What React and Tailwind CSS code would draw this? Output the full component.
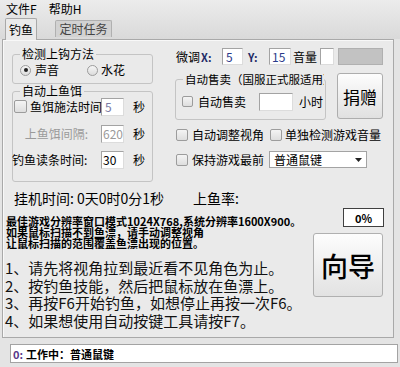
import React from "react";

const Box = ({ w, h, children, className = "" }) => (
  <div
    className={`bg-white border border-[#a3a3a3] border-b-[#dcdcdc] border-r-[#dcdcdc] flex items-center px-[3px] text-[12px] ${className}`}
    style={{ width: w, height: h }}
  >
    {children}
  </div>
);

const Check = ({ size = 12 }) => (
  <span
    className="inline-block shrink-0 border border-[#9c9c9c] rounded-[2px] bg-gradient-to-b from-[#f4f4f4] to-[#dedede]"
    style={{ width: size, height: size }}
  />
);

const Radio = ({ on }) => (
  <span className="w-[11px] h-[11px] shrink-0 rounded-full border border-[#9c9c9c] bg-gradient-to-b from-[#f6f6f6] to-[#dcdcdc] flex items-center justify-center">
    {on && <span className="w-[4px] h-[4px] rounded-full bg-[#222]" />}
  </span>
);

const Group = ({ title, className = "", legendClass = "", children }) => (
  <fieldset className={`border border-[#c4c4c4] rounded-[3px] ${className}`}>
    <legend className={`ml-[7px] px-[2px] leading-[14px] ${legendClass}`}>{title}</legend>
    {children}
  </fieldset>
);

export default function App() {
  return (
    <div className="w-[400px] h-[367px] bg-[#e4e4e4] text-[12px] leading-[14px] text-black font-['Noto_Sans_CJK_SC',sans-serif] flex flex-col overflow-hidden">
      <div className="bg-gradient-to-b from-[#ececec] to-[#d9d9d9]">
        <div className="h-[17px] flex items-center gap-[12px] pl-[6px]">
          <span>文件F</span>
          <span>帮助H</span>
        </div>
        <div className="h-[22px] flex items-end pl-[5px] gap-[18px]">
          <div className="relative z-10 -mb-px h-[22px] w-[32px] bg-[#eaeaea] border border-b-0 border-[#a9a9a9] rounded-t-[2px] flex items-center justify-center">
            钓鱼
          </div>
          <div className="mb-[2px] h-[17px] w-[57px] bg-[#d2d2d2] border border-b-0 border-[#b0b0b0] rounded-t-[2px] flex items-center justify-center text-[#444]">
            定时任务
          </div>
        </div>
      </div>

      <div className="ml-[2px] w-[392px] h-[299px] bg-[#eaeaea] border border-[#a9a9a9] shadow-[inset_1px_1px_0_#f8f8f8]">
        <div className="flex">
          {/* left column */}
          <div className="ml-[9px] mt-[7px] w-[141px]">
            <Group title="检测上钩方法" className="h-[37px]">
              <div className="mt-[2px] h-[14px] pl-[7px] flex items-center">
                <Radio on />
                <span className="ml-[4px]">声音</span>
                <span className="ml-[28px]">
                  <Radio />
                </span>
                <span className="ml-[3px]">水花</span>
              </div>
            </Group>
            <Group title="自动上鱼饵" className="h-[98px]">
              <div className="h-[18px] flex items-center">
                <div className="w-[88px] flex items-center">
                  <span className="ml-[1px]">
                    <Check size={13} />
                  </span>
                  <span className="ml-[3px] whitespace-nowrap">鱼饵施法时间</span>
                </div>
                <Box w={23} h={18} className="text-[#7b7ba3]">5</Box>
                <span className="ml-[9px]">秒</span>
              </div>
              <div className="mt-[9px] h-[18px] flex items-center">
                <span className="w-[75px] text-right text-[#9a9a9a] whitespace-nowrap">上鱼饵间隔:</span>
                <span className="ml-[13px]">
                  <Box w={23} h={18} className="text-[#9a9a9a] !px-[1px]">620</Box>
                </span>
                <span className="ml-[9px]">秒</span>
              </div>
              <div className="mt-[8px] h-[18px] flex items-center">
                <span className="w-[75px] text-right whitespace-nowrap -ml-[1px]">钓鱼读条时间:</span>
                <span className="ml-[14px]">
                  <Box w={23} h={18} className="!px-[1px]">30</Box>
                </span>
                <span className="ml-[9px]">秒</span>
              </div>
            </Group>
          </div>

          {/* right column */}
          <div className="ml-[22px] mt-[8px] w-[210px]">
            <div className="h-[17px] flex items-center pl-[1px]">
              <span className="w-[25px]">微调</span>
              <span className="w-[21px] font-bold text-[#1f2a66] text-[11px]">X:</span>
              <Box w={21} h={17} className="text-[#2a3a8a]">5</Box>
              <span className="ml-[5px] w-[21px] font-bold text-[#1f2a66] text-[11px]">Y:</span>
              <Box w={22} h={17} className="text-[#2a3a8a] !px-[2px]">15</Box>
              <span className="ml-[2px] w-[27px]">音量</span>
              <Box w={14} h={17} />
              <div className="ml-[4px] w-[45px] h-[17px] bg-[#c2c2c2] border border-[#b0b0b0]" />
            </div>
            <div className="mt-[7px] flex items-start">
              <Group
                title="自动售卖（国服正式服适用）"
                className="w-[151px] h-[48px] min-w-0"
                legendClass="max-w-[141px] overflow-hidden whitespace-nowrap text-[11.5px]"
              >
                <div className="mt-[7px] h-[18px] flex items-center">
                  <span className="ml-[6px]">
                    <Check size={11} />
                  </span>
                  <span className="ml-[5px] w-[61px]">自动售卖</span>
                  <Box w={34} h={18} />
                  <span className="ml-[6px]">小时</span>
                </div>
              </Group>
              <button className="ml-[11px] mt-[1px] w-[46px] h-[46px] rounded-[3px] border border-[#adadad] bg-gradient-to-b from-[#fdfdfd] to-[#e0e0e0] text-[17px] leading-none">
                捐赠
              </button>
            </div>
            <div className="mt-[8px] h-[14px] flex items-center pl-[1px]">
              <Check />
              <span className="ml-[4px] w-[78px] whitespace-nowrap">自动调整视角</span>
              <Check />
              <span className="ml-[3px] whitespace-nowrap">单独检测游戏音量</span>
            </div>
            <div className="mt-[9px] h-[17px] flex items-center pl-[1px]">
              <Check />
              <span className="ml-[4px] w-[77px] whitespace-nowrap">保持游戏最前</span>
              <div className="w-[98px] h-[17px] bg-white border border-[#a3a3a3] flex items-center">
                <span className="flex-1 pl-[4px]">普通鼠键</span>
                <span className="w-[15px] h-full flex items-center justify-center">
                  <svg width="7" height="4" viewBox="0 0 7 4">
                    <path d="M0 0h7L3.5 4z" fill="#222" />
                  </svg>
                </span>
              </div>
            </div>
          </div>
        </div>

        {/* bottom */}
        <div className="mt-[8px] pl-[11px] h-[16px] flex items-center text-[14px] leading-[16px]">
          <span className="w-[179px] whitespace-nowrap">挂机时间: 0天0时0分1秒</span>
          <span>上鱼率:</span>
        </div>
        <div className="flex">
          <div className="w-[310px] pl-[3px]">
            <div className="mt-[10px] text-[11px] leading-[11px] font-semibold whitespace-nowrap">
              <div>最佳游戏分辨率窗口模式1024X768,系统分辨率1600X900。</div>
              <div>如果鼠标扫描不到鱼漂，请手动调整视角</div>
              <div>让鼠标扫描的范围覆盖鱼漂出现的位置。</div>
            </div>
            <div className="mt-[10px] -ml-[1px] text-[15px] leading-[17.7px] text-[#111] whitespace-nowrap">
              <div>1、请先将视角拉到最近看不见角色为止。</div>
              <div>2、按钓鱼技能，然后把鼠标放在鱼漂上。</div>
              <div>3、再按F6开始钓鱼，如想停止再按一次F6。</div>
              <div>4、如果想使用自动按键工具请按F7。</div>
            </div>
          </div>
          <div className="w-[71px]">
            <div className="ml-[30px] mt-[2px] w-[41px] h-[19px] bg-white border border-[#404040] flex items-center justify-center text-[11px] font-semibold">
              0%
            </div>
            <button className="mt-[6px] w-[70px] h-[64px] rounded-[3px] border border-[#b0b0b0] bg-gradient-to-b from-[#fdfdfd] to-[#e2e2e2] text-[27px] leading-none font-medium">
              向导
            </button>
          </div>
        </div>
      </div>

      <div className="mt-[6px] ml-[10px] w-[388px] h-[19px] bg-white border border-[#a3a3a3] flex items-center pl-[2px] text-[11px] font-semibold">
        <span className="text-[#5a3a8a]">0:</span>
        <span className="ml-[3px]">工作中：普通鼠键</span>
      </div>
    </div>
  );
}
